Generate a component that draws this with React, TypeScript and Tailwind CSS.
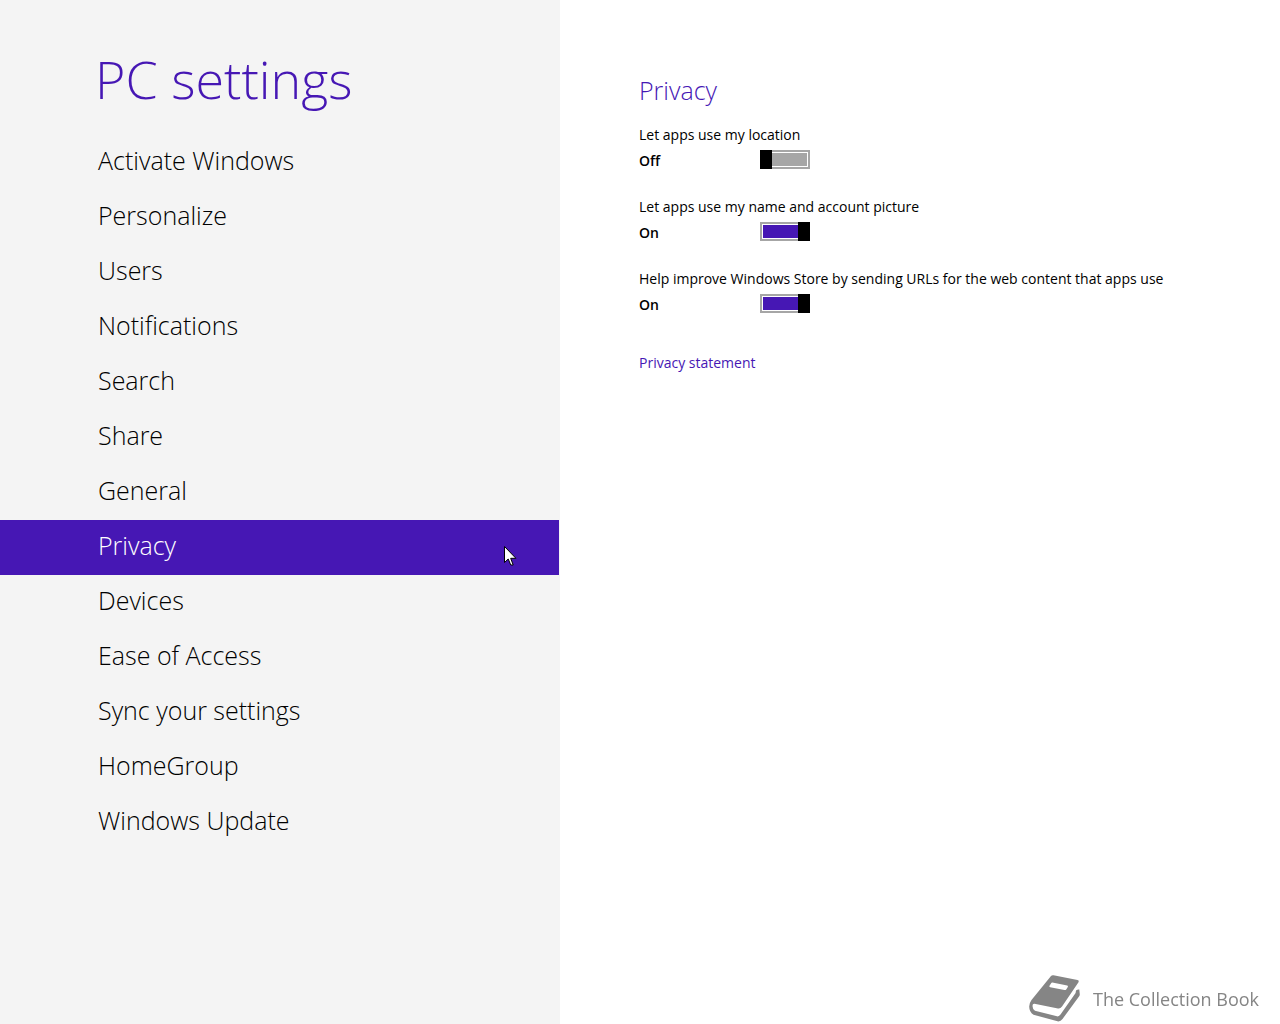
import { useState } from 'react';
import clsx from 'clsx';

interface PrivacySetting {
  id: string;
  label: string;
  enabled: boolean;
}

const sections = [
  'Activate Windows',
  'Personalize',
  'Users',
  'Notifications',
  'Search',
  'Share',
  'General',
  'Privacy',
  'Devices',
  'Ease of Access',
  'Sync your settings',
  'HomeGroup',
  'Windows Update',
];

const initialSettings: PrivacySetting[] = [
  { id: 'location', label: 'Let apps use my location', enabled: false },
  { id: 'account', label: 'Let apps use my name and account picture', enabled: true },
  {
    id: 'urls',
    label: 'Help improve Windows Store by sending URLs for the web content that apps use',
    enabled: true,
  },
];

const Cursor = () => (
  <svg className="absolute right-[42px] top-[26px]" width="13" height="20" viewBox="0 0 13 20" aria-hidden="true">
    <path
      d="M0.5 0.5V16.5L4.2 13L6.8 19H9.2L6.7 12.3H11.9Z"
      fill="#fff"
      stroke="#000"
      strokeWidth="1"
    />
  </svg>
);

const BookIcon = () => (
  <svg width="51" height="47" viewBox="0 0 51 47" aria-hidden="true">
    <path
      fill="#858585"
      fillRule="evenodd"
      d="M22 0.9Q23 0 24.5 0.3L48.5 5Q50.6 5.6 49.5 7.3L33 31.5Q31.3 34 29 33.5L5.5 28.8Q3.4 28.6 3.5 31Q3.6 34.5 6 35.8L28 41.3Q30 41.8 31.5 39.6L46.6 18L47 15.5Q48.8 14.2 50.3 14.6L50.8 19.5Q50.8 20.5 50 21.5L33.5 44Q31.5 46.8 28.5 46.3L4.5 39.7Q0.2 37 0.2 31.5Q0.3 28 2.5 25ZM23.4 7.6L38.2 10.4Q39.4 10.8 38.8 11.9L37.2 14.4Q36.6 15.3 35.4 15L21.2 12.3Q19.9 11.9 20.5 10.8L22 8.4Q22.5 7.5 23.4 7.6Z"
    />
  </svg>
);

const ToggleRow = ({ setting, onToggle }: { setting: PrivacySetting; onToggle: () => void }) => (
  <div className="h-[72px]">
    <label htmlFor={setting.id} className="block text-[14px] leading-[20px]">
      {setting.label}
    </label>
    <div className="mt-[5px] flex h-[20px] items-start">
      <span className="w-[121px] text-[14px] font-semibold leading-[22px]">
        {setting.enabled ? 'On' : 'Off'}
      </span>
      <input
        id={setting.id}
        type="checkbox"
        role="switch"
        checked={setting.enabled}
        onChange={onToggle}
        className="relative h-[19px] w-[50px] appearance-none border-2 border-[#a6a6a6] bg-[#a6a6a6] ring-1 ring-inset ring-white before:absolute before:-left-[2px] before:-top-[2px] before:h-[19px] before:w-[12px] before:bg-black checked:bg-[#4617b4] checked:before:left-auto checked:before:-right-[2px]"
      />
    </div>
  </div>
);

export default function App() {
  const [active, setActive] = useState('Privacy');
  const [settings, setSettings] = useState(initialSettings);

  const toggle = (id: string) => {
    setSettings(settings.map((s) => (s.id === id ? { ...s, enabled: !s.enabled } : s)));
  };

  return (
    <div className="flex min-h-screen bg-white font-['Open_Sans',sans-serif] text-black">
      <aside className="w-7/16 shrink-0 bg-[#f4f4f4] pt-[41px]">
        <h1 className="h-[94px] pl-[95px] text-[52px] font-light leading-[76px] text-[#4617b4]">PC settings</h1>
        <nav className="mr-px">
          {sections.map((name) => (
            <button
              key={name}
              onClick={() => setActive(name)}
              className={clsx(
                'relative block h-[55px] w-full pb-[5px] pl-[98px] text-left text-[25px] font-light leading-[36px]',
                active === name && 'bg-[#4617b4] text-white',
              )}
            >
              {name}
              {active === name && <Cursor />}
            </button>
          ))}
        </nav>
      </aside>

      <main className="flex-1 pl-[79px] pt-[72px]">
        <h2 className="text-[25px] font-light leading-[36px] text-[#4617b4]">Privacy</h2>
        <div className="mt-[17px]">
          {settings.map((setting) => (
            <ToggleRow key={setting.id} setting={setting} onToggle={() => toggle(setting.id)} />
          ))}
        </div>
        <a href="#privacy-statement" className="mt-[12px] inline-block text-[14px] leading-[20px] text-[#4617b4]">
          Privacy statement
        </a>
      </main>

      <div className="fixed bottom-[2px] right-[21px] flex items-center gap-[13px] text-[#858585]">
        <BookIcon />
        <span className="text-[18px] leading-[26px]">The Collection Book</span>
      </div>
    </div>
  );
}
